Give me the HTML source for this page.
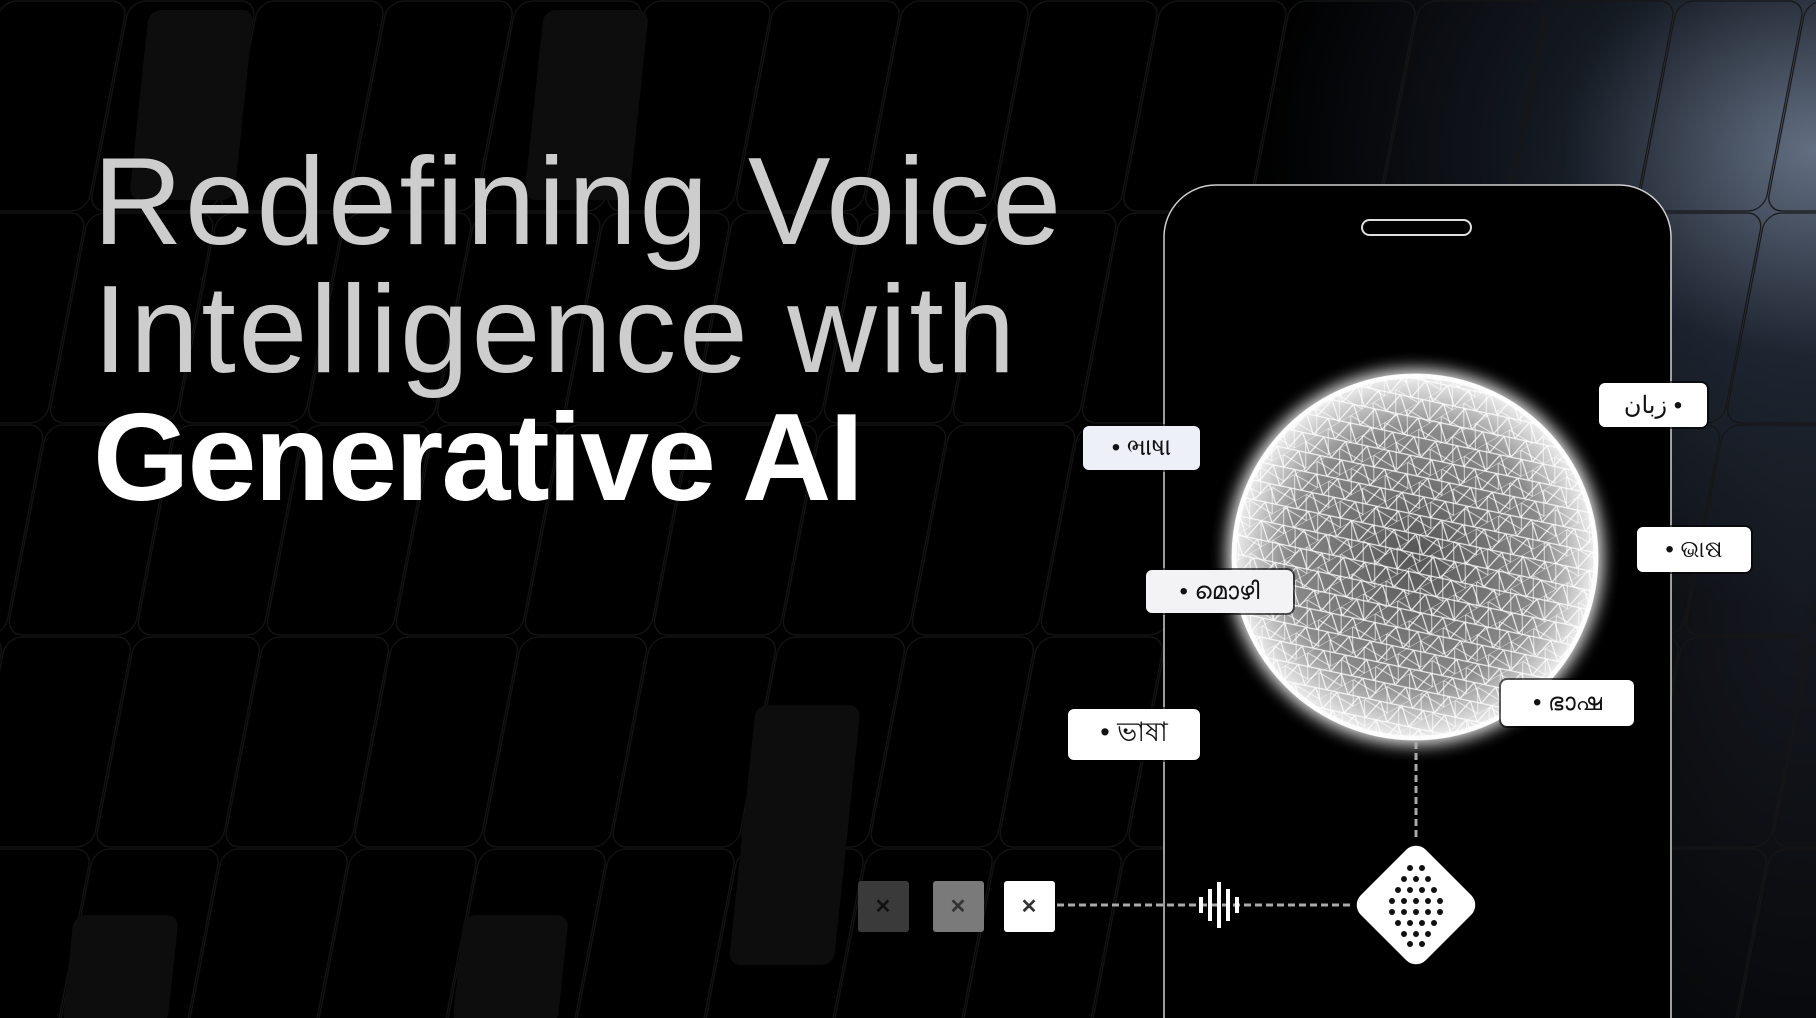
<!DOCTYPE html>
<html><head><meta charset="utf-8">
<style>
html,body{margin:0;padding:0;background:#000;}
body{width:1816px;height:1018px;position:relative;overflow:hidden;font-family:"Liberation Sans",sans-serif;}
.glow{position:absolute;inset:0;background:
 radial-gradient(ellipse 560px 460px at 1816px 150px, rgba(160,180,210,.6), rgba(60,75,100,.35) 45%, rgba(0,0,0,0) 100%),
 radial-gradient(ellipse 380px 700px at 1800px 600px, rgba(60,70,90,.35), rgba(0,0,0,0) 100%);}
.title{position:absolute;left:93px;top:138px;font-size:124px;line-height:128px;letter-spacing:2.5px;color:#cdcdcd;}
.title b{color:#fff;font-weight:bold;letter-spacing:-2px;}
.lbl{position:absolute;background:#fff;border-radius:6px;box-shadow:0 0 0 2px rgba(0,0,0,.6);color:#111;
 font-family:"Liberation Sans","Noto Sans CJK SC",sans-serif;font-size:24px;display:flex;align-items:center;justify-content:center;}
</style></head><body>
<div class="glow"></div>
<svg width="1816" height="1018" style="position:absolute;left:0;top:0">
 <defs>
  <pattern id="grid" width="129" height="212" patternUnits="userSpaceOnUse" patternTransform="skewX(-11)">
   <rect x="1" y="1" width="127" height="210" rx="16" fill="none" stroke="#151515" stroke-width="1.2"/>
  </pattern>
  <radialGradient id="sph" cx="50%" cy="50%" r="50%">
   <stop offset="0" stop-color="#555"/><stop offset=".7" stop-color="#8a8a8a"/><stop offset="1" stop-color="#f2f2f2"/>
  </radialGradient>
  <pattern id="mesh" width="22" height="19" patternUnits="userSpaceOnUse" patternTransform="rotate(12)">
   <path d="M0 0L22 0M0 0L11 19L22 0M0 19L22 19" stroke="#fff" stroke-width="1.2" fill="none" opacity=".85"/>
  </pattern>
  <pattern id="mesh2" width="26" height="23" patternUnits="userSpaceOnUse" patternTransform="rotate(-30)">
   <path d="M0 0L26 0M0 0L13 23L26 0" stroke="#fff" stroke-width="1" fill="none" opacity=".7"/>
  </pattern>
  <filter id="blur"><feGaussianBlur stdDeviation="8"/></filter>
  <clipPath id="cc"><circle cx="1415" cy="557" r="183"/></clipPath>
 </defs>
 <rect width="1816" height="1018" fill="url(#grid)"/>
 <g fill="#0d0d0d">
  <rect x="150" y="10" width="105" height="190" rx="12" transform="skewX(-6)"/>
  <rect x="545" y="10" width="105" height="190" rx="12" transform="skewX(-6)"/>
  <rect x="830" y="705" width="105" height="260" rx="12" transform="skewX(-6)"/>
  <rect x="170" y="915" width="105" height="110" rx="12" transform="skewX(-6)"/>
  <rect x="560" y="915" width="105" height="110" rx="12" transform="skewX(-6)"/>
 </g>
 <path d="M1164 1018V237a52 52 0 0 1 52-52H1619a52 52 0 0 1 52 52V1018" fill="#000" stroke="#cfcfcf" stroke-width="1.5"/>
 <rect x="1362" y="220" width="109" height="15" rx="7.5" fill="none" stroke="#ddd" stroke-width="2"/>
 <circle cx="1415" cy="557" r="188" fill="#fff" filter="url(#blur)" opacity=".9"/>
 <circle cx="1415" cy="557" r="183" fill="url(#sph)"/>
 <g clip-path="url(#cc)">
  <rect x="1220" y="360" width="400" height="400" fill="url(#mesh)"/>
  <rect x="1220" y="360" width="400" height="400" fill="url(#mesh2)"/>
 </g>
 <circle cx="1415" cy="557" r="181" fill="none" stroke="#fff" stroke-width="5" opacity=".8"/>
 <line x1="1416" y1="742" x2="1416" y2="838" stroke="#aaa" stroke-width="3" stroke-dasharray="7 4"/>
 <line x1="1057" y1="905" x2="1350" y2="905" stroke="#aaa" stroke-width="3" stroke-dasharray="7 4"/>
 <g fill="#fff">
  <rect x="1199" y="897" width="4" height="16"/><rect x="1208" y="889" width="4" height="32"/>
  <rect x="1217" y="882" width="4" height="46"/><rect x="1226" y="889" width="4" height="32"/>
  <rect x="1235" y="897" width="4" height="16"/>
 </g>
 <rect x="858" y="881" width="51" height="51" rx="3" fill="#3a3a3a"/>
 <rect x="933" y="881" width="51" height="51" rx="3" fill="#7a7a7a"/>
 <rect x="1004" y="881" width="51" height="51" rx="3" fill="#fff"/>
 <g font-family="Liberation Sans" font-size="20" font-weight="bold" text-anchor="middle">
  <text x="883" y="913" fill="#111">✕</text><text x="958" y="913" fill="#333">✕</text><text x="1029" y="913" fill="#333">✕</text>
 </g>
 <rect x="1370" y="859" width="92" height="92" rx="14" fill="#fff" transform="rotate(45 1416 905)"/>
 <g fill="#111">
  <circle cx="1410" cy="868" r="3"/><circle cx="1422" cy="868" r="3"/>
  <circle cx="1404" cy="879" r="3"/><circle cx="1416" cy="879" r="3"/><circle cx="1428" cy="879" r="3"/>
  <circle cx="1398" cy="890" r="3"/><circle cx="1410" cy="890" r="3"/><circle cx="1422" cy="890" r="3"/><circle cx="1434" cy="890" r="3"/>
  <circle cx="1392" cy="901" r="3"/><circle cx="1404" cy="901" r="3"/><circle cx="1416" cy="901" r="3"/><circle cx="1428" cy="901" r="3"/><circle cx="1440" cy="901" r="3"/>
  <circle cx="1392" cy="912" r="3"/><circle cx="1404" cy="912" r="3"/><circle cx="1416" cy="912" r="3"/><circle cx="1428" cy="912" r="3"/><circle cx="1440" cy="912" r="3"/>
  <circle cx="1398" cy="923" r="3"/><circle cx="1410" cy="923" r="3"/><circle cx="1422" cy="923" r="3"/><circle cx="1434" cy="923" r="3"/>
  <circle cx="1404" cy="934" r="3"/><circle cx="1416" cy="934" r="3"/><circle cx="1428" cy="934" r="3"/>
  <circle cx="1410" cy="944" r="3"/><circle cx="1422" cy="944" r="3"/>
 </g>
</svg>
<div class="title">Redefining Voice<br>Intelligence with<br><b>Generative AI</b></div>
<div class="lbl" style="left:1083px;top:426px;width:117px;height:44px;background:#eef0f8">• ભાષા</div>
<div class="lbl" style="left:1599px;top:383px;width:108px;height:44px;">زبان •</div>
<div class="lbl" style="left:1637px;top:527px;width:114px;height:45px;">• ଭାଷ</div>
<div class="lbl" style="left:1146px;top:570px;width:147px;height:43px;background:#f3f3f5">• മൊഴി</div>
<div class="lbl" style="left:1068px;top:709px;width:132px;height:51px;font-size:27px">• ভাষা</div>
<div class="lbl" style="left:1501px;top:680px;width:133px;height:46px;">• ഭാഷ</div>
</body></html>
